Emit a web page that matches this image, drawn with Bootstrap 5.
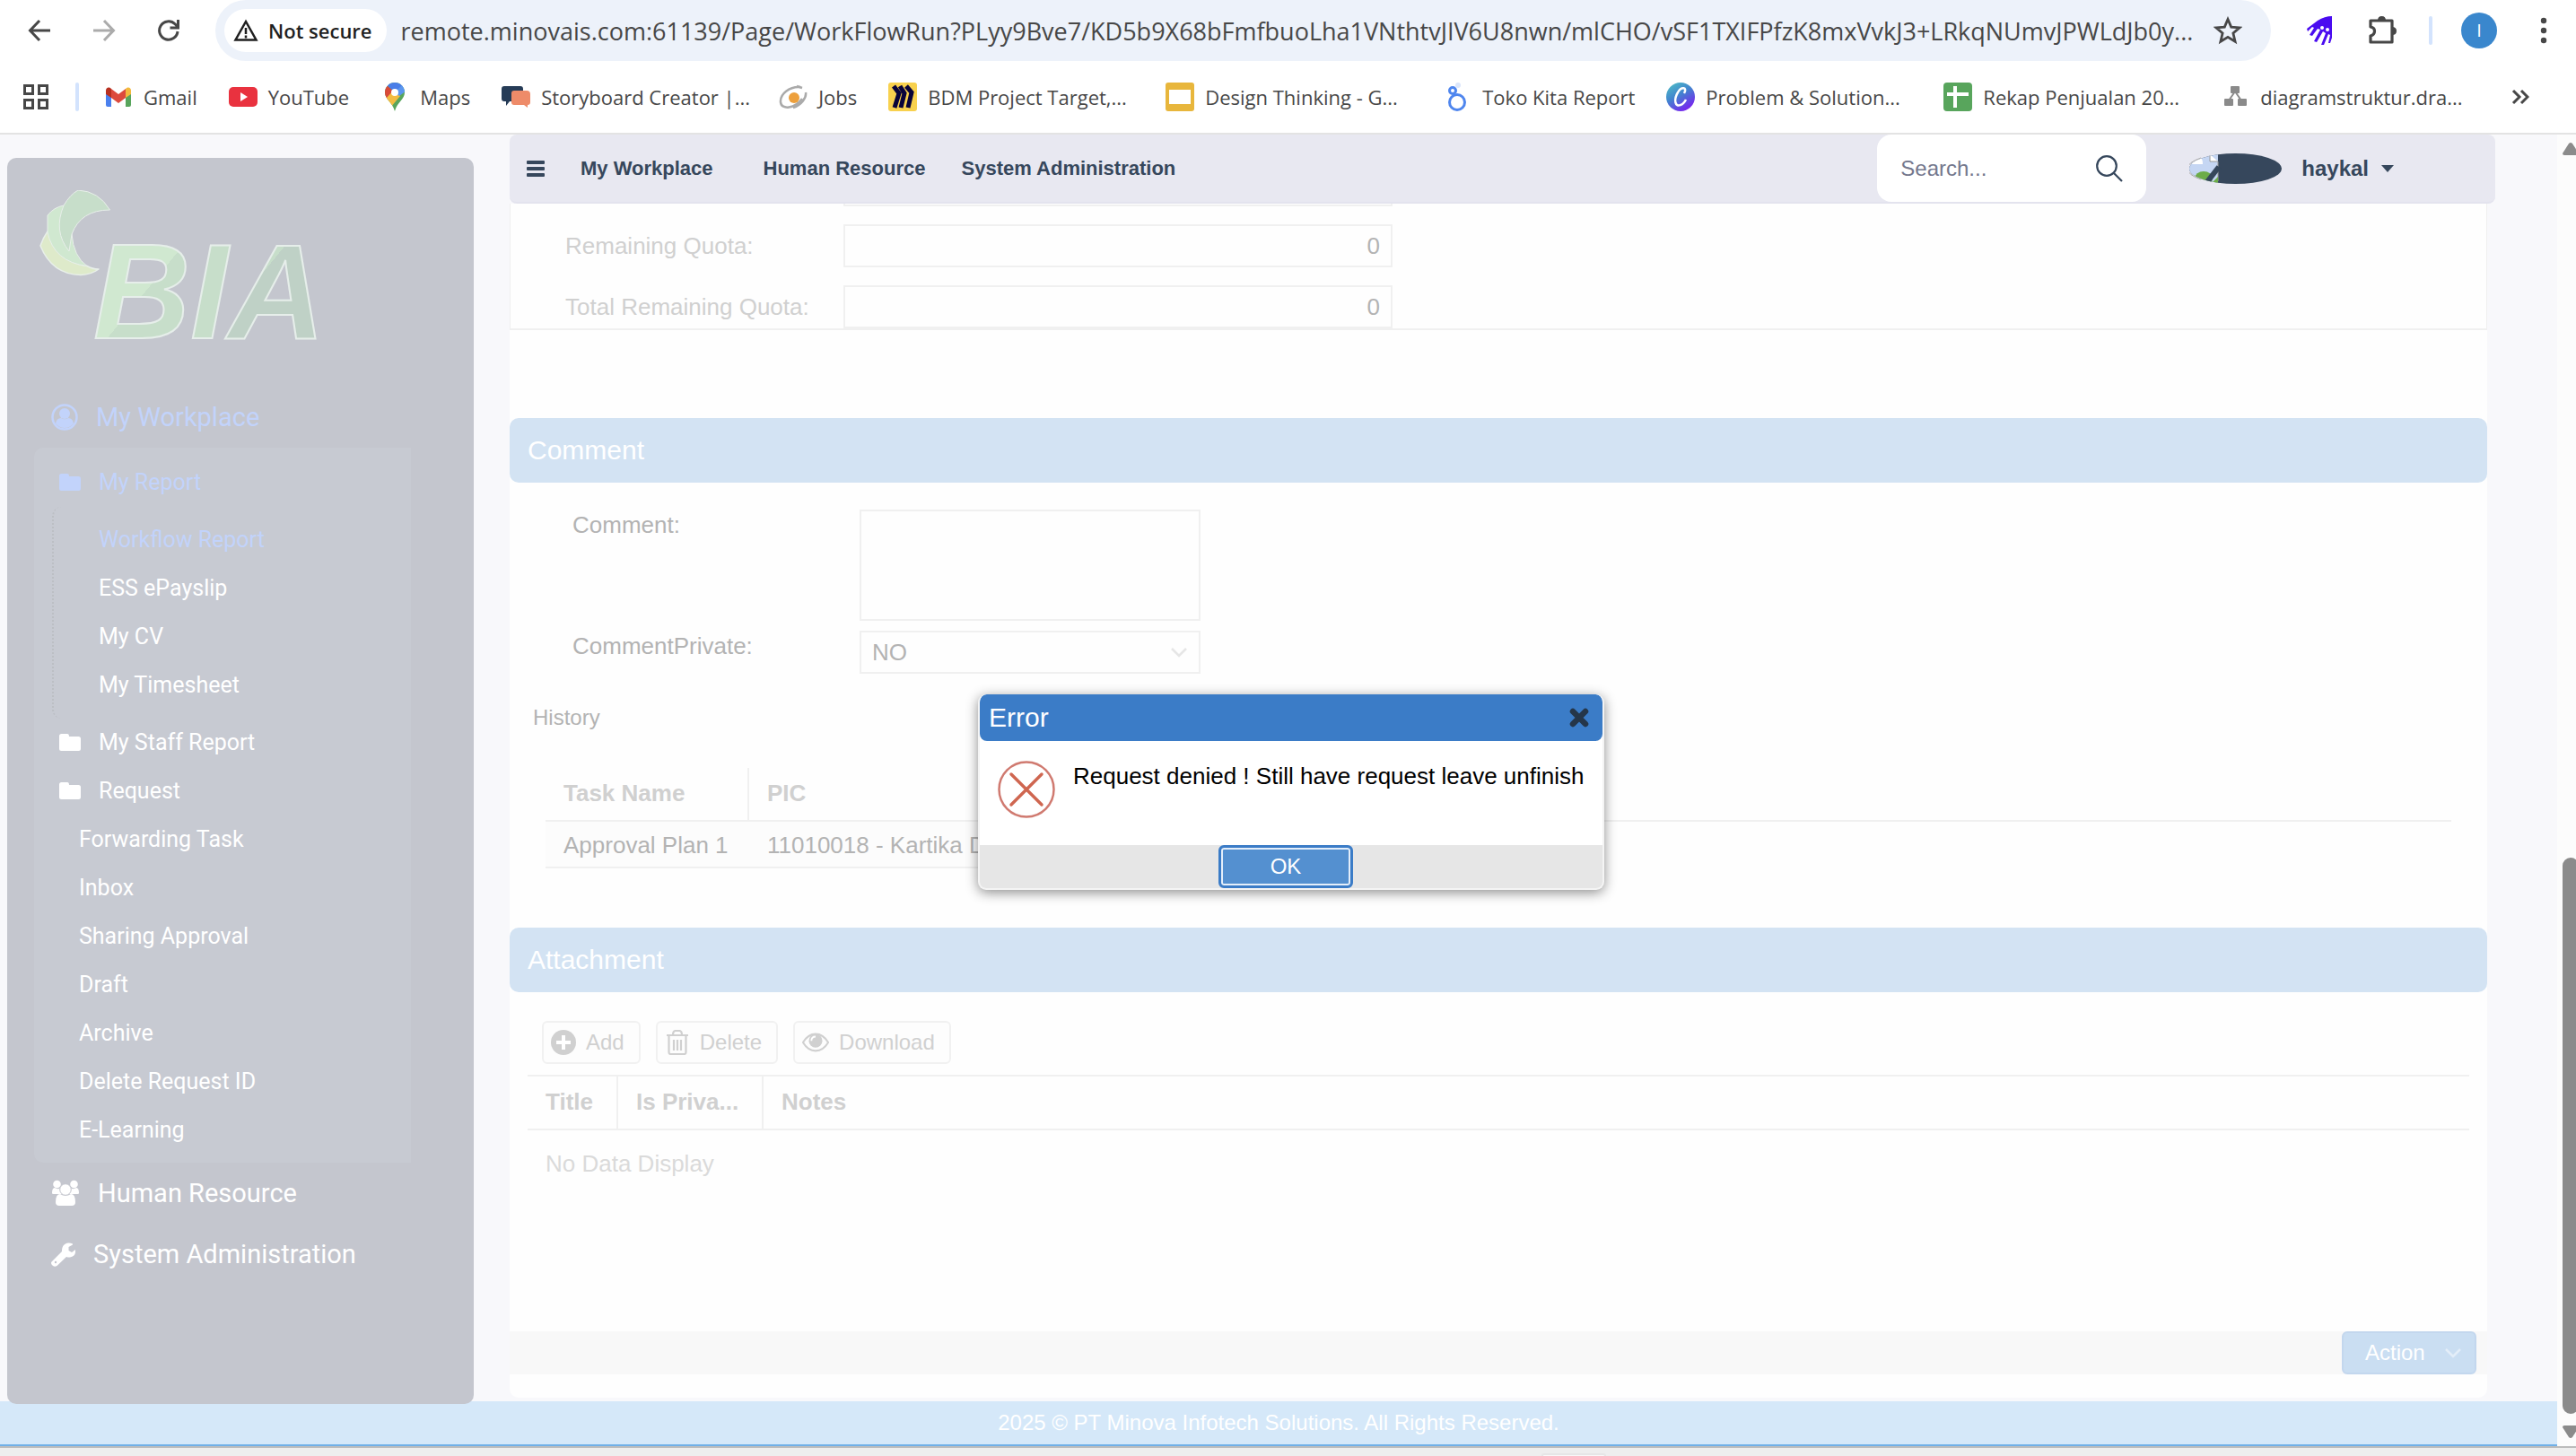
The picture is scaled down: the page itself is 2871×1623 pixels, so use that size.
<!DOCTYPE html>
<html lang="en">
<head>
<meta charset="utf-8">
<meta name="viewport" content="width=device-width, initial-scale=1">
<title>WorkFlowRun</title>
<link href="https://cdn.jsdelivr.net/npm/bootstrap@5.3.0/dist/css/bootstrap.min.css" rel="stylesheet">
<style>
body{font-family:"Liberation Sans",Arial,sans-serif;font-size:26px;line-height:34px;color:#b3b3b3;background:#fff;min-height:100vh;overflow:hidden}
a{text-decoration:none;color:inherit}
svg{display:block;flex:none}
button{font-family:inherit}
/* browser chrome */
.toolbar-row{height:68px;padding-left:8px}
.tool-btn{width:72px;height:68px;padding:0;border:0;background:none;display:flex;align-items:center;justify-content:center;flex:none}
.omnibox{height:68px;margin:0 16px;padding:0 32px 0 10px;background:#edf2fa;border-radius:34px;font-family:"Open Sans",sans-serif}
.chip{height:48px;border-radius:24px;padding:0 16px 0 10px;gap:11px;background:#fff;border:0;color:#1f1f1f;font-size:22px;font-weight:600;white-space:nowrap}
.url-field{border:0;background:none;margin-left:16px;padding:0;height:60px;font-size:27px;color:#474747;outline:0;min-width:0}
.rule-v{width:4px;height:32px;border-radius:2px;background:#d3e3fd;flex:none}
.rule-apps{margin:0 28px 0 30px}
.user-dot{width:40px;height:40px;border-radius:50%;background:#3a87cd;color:#fff;font-size:20px;line-height:40px;font-family:"Open Sans",sans-serif}
.bookmarks{height:82px;padding:0 36px 0 26px;border-bottom:2px solid #e3e3e3;font-family:"Open Sans",sans-serif;font-size:22px;color:#474747}
.bm{display:flex;align-items:center;gap:12px;padding-right:35px;white-space:nowrap;flex:none}
.bm-cut{width:309px;padding-right:0}
/* application */
.shell{background:#f8f8fb;min-width:0}
.shell-cols{padding-right:69px}
.side{width:520px;margin:26px 0 -3px 8px;padding-top:36px;background:#c4c6ce;border-radius:10px;color:#fff;font-family:Roboto,sans-serif;position:relative;flex:none}
.side-logo{margin:0 0 49px 36px}
.side ul{list-style:none;margin:0;padding:0}
.top-item{height:68px;padding-left:49px;gap:20px;font-size:29px;display:flex;align-items:center}
.sub-box{margin-left:30px!important;width:420px;padding:12px 0 9px!important;background:#c7cad2;border-radius:10px 0 0 10px;font-size:25px}
.sub-item{height:54px;padding-left:50px;display:flex;align-items:center;gap:20px}
.with-folder{padding-left:28px}
.nest{margin-left:20px!important;padding:10px 0!important;border-left:2px dotted #bcbfc4;border-radius:10px}
.current{color:#c2d3fb}
.main-col{margin-left:40px;padding-bottom:4px;min-width:0}
.top-nav{height:77px;padding:0 113px 0 19px;background:#e8e8f1;border-bottom:2px solid #e3e3ee;border-radius:8px;color:#36475c;font-size:22px;font-weight:700}
.top-nav a{white-space:nowrap}
.link-first{margin:0 56px 0 40px}
.link-next{margin-right:40px}
.search-box{width:300px;height:75px;border-radius:16px;background:#fff;padding:0 26px 0 26px}
.search-box input{border:0;outline:0;width:100%;min-width:0;padding:0;font-size:24px;background:none}
.search-box input::placeholder{color:#74788d;opacity:1}
.user-menu{margin-left:48px;gap:14px;font-size:24px}
.panel{margin-right:9px;background:#fefefe;border-radius:0 0 10px 10px;padding-bottom:26px}
.quota{border:solid #f0f0f0;border-width:0 1px 2px;padding-left:61px;margin-bottom:98px;color:#d0d0d0}
.quota-cut{height:3px;margin-bottom:20px;display:flex;overflow:hidden}
.quota-cut span{width:612px;margin-left:310px;border:solid #f0f0f0;border-width:0 2px 2px}
.quota-line{display:flex;align-items:center;margin-bottom:20px}
.quota-line:last-child{margin-bottom:0}
.quota-line label{width:310px}
.box{border:2px solid #f0f0f0;border-radius:0;background-color:#fefefe;color:#b3b3b3;font-size:26px;line-height:34px;padding:0 12px;height:48px;box-shadow:none}
.quota-line .box{width:612px;text-align:right}
.section-bar{height:72px;border-radius:10px;background:#d3e3f3;color:#fff;font-size:30px;line-height:72px;padding-left:20px;margin:0;font-weight:400}
.comment-form{padding:30px 0 0 70px}
.comment-line{display:flex;align-items:flex-start;margin-bottom:11px}
.comment-line label{width:320px}
.comment-line .box{width:380px}
.comment-line textarea.box{height:124px;resize:none}
.comment-line select.box{background-image:url("data:image/svg+xml,%3Csvg xmlns='http://www.w3.org/2000/svg' viewBox='0 0 18 11'%3E%3Cpath d='M1 1l8 8 8-8' fill='none' stroke='%23e6e6e6' stroke-width='2.5'/%3E%3C/svg%3E");background-size:18px 11px;background-position:right 13px center}
.history-title{margin:32px 0 39px 26px;font-size:24px}
.grid{border-collapse:separate;border-spacing:0;table-layout:fixed}
.grid th{height:60px;padding:0 0 2px 20px;border-bottom:2px solid #f0f0f0;color:#d0d0d0;font-weight:700;vertical-align:middle;white-space:nowrap}
.grid th+th{border-left:2px solid #f0f0f0}
.grid th.plain{border-left:0}
.grid td{padding:2px 0 0 20px;white-space:nowrap}
.history{margin:0 40px 66px;width:calc(100% - 80px)}
.history td{height:52px;background:#fcfcfc;border-bottom:2px solid #f0f0f0}
.history td+td{padding-left:22px}
.history td.plain{background:none;border:0}
.files{margin:0 20px 150px;width:calc(100% - 40px)}
.files th{height:62px;border-top:2px solid #f0f0f0}
.files td{height:74px;padding-top:0;color:#dadada}
.file-tools{padding:32px 0 12px 36px;gap:17px}
.tool{height:48px;border:2px solid #f1f1f1;border-radius:6px;background:#fdfdfd;color:#d0d0d0;font-size:24px;padding:0 16px 0 8px;gap:11px;display:flex;align-items:center}
.action-bar{background:#f8f8f8;padding-right:12px}
.action-btn{width:150px;height:48px;border:2px solid #c3d7ee;border-radius:6px;background:#cadef2;color:#fff;font-size:24px;padding:0 15px 0 24px}
.foot{height:50px;background:#d5e8f9;border-bottom:2px solid #70b0e8;color:#fff;font-size:24px;line-height:48px}
.scroll{width:21px;background:#fcfcfc;padding:9px 0 9px 6px;overflow:hidden;flex:none}
.thumb{width:18px;flex:0 0 620px;background:#8b8b8b;border-radius:9px;margin:auto 0 13px}
.status{height:11px;border-top:2px solid #bcbcbc;background:#eee;padding:6px 0 0 1718px}
.status span{display:block;width:72px;height:3px;border:2px solid #e6e6e6;border-bottom:0;border-radius:6px 6px 0 0;background:#f8f8f8}
/* message window */
.msg{position:absolute;left:1090px;top:774px;width:698px;border:2px solid #f4f4f4;border-top:0;border-radius:9px;background:#fff;box-shadow:0 3px 14px rgba(0,0,0,.45);color:#000;overflow:hidden}
.msg-head{height:52px;border-radius:8px;background:#3b7cc7;color:#fff;font-size:30px;padding:0 15px 0 10px}
.msg-body{height:116px;padding:22px 0 0 20px;gap:20px}
.msg-foot{height:48px;background:#e6e6e6;padding-right:12px}
.ok{width:150px;height:48px;padding:0;border:3px solid #3b7cc7;border-radius:6px;box-shadow:inset 0 0 0 2px #e4eefa;background:#5490d0;color:#fff;font-size:24px}
</style>
<script src="https://cdn.jsdelivr.net/npm/bootstrap@5.3.0/dist/js/bootstrap.bundle.min.js"></script>
</head>
<body class="d-flex flex-column position-relative">
<header>
  <div class="toolbar-row d-flex align-items-center">
    <button class="tool-btn" aria-label="Back"><svg width="26" height="26" viewBox="0 0 26 26" fill="none" stroke="#474747" stroke-width="3"><path d="M25 13H3M13 2L2.500 13 13 24"/></svg></button>
    <button class="tool-btn" aria-label="Forward"><svg width="26" height="26" viewBox="0 0 26 26" fill="none" stroke="#ababab" stroke-width="3"><path d="M1 13h22M13 2l10.500 11L13 24"/></svg></button>
    <button class="tool-btn" aria-label="Reload"><svg width="26" height="26" viewBox="0 0 26 26" fill="none" stroke="#474747" stroke-width="3"><path d="M23 14a10.200 10.200 0 1 1-3-8.200l3 3M23.500 1v9h-9"/></svg></button>
    <div class="omnibox d-flex align-items-center flex-grow-1">
      <button class="chip d-flex align-items-center"><svg width="28" height="26" viewBox="0 0 28 26" fill="none" stroke="#1f1f1f" stroke-width="2.500"><path d="M14 3L2.500 23.500h23z"/><path d="M14 10v7M14 18.500v3"/></svg>Not secure</button>
      <input class="url-field flex-grow-1" aria-label="Address" value="remote.minovais.com:61139/Page/WorkFlowRun?PLyy9Bve7/KD5b9X68bFmfbuoLha1VNthtvJIV6U8nwn/mlCHO/vSF1TXIFPfzK8mxVvkJ3+LRkqNUmvJPWLdJb0y...">
      <svg width="32" height="32" viewBox="0 0 32 32" fill="none" stroke="#474747" stroke-width="2.800"><path d="M16 3.500l3.700 8.600 9.300.8-7.100 6.100 2.200 9.200-8.100-4.900-8.100 4.900 2.200-9.200L3 12.900l9.300-.8z"/></svg>
    </div>
    <button class="tool-btn" aria-label="Extension"><svg width="34" height="34" viewBox="0 0 34 34"><path fill="#4a0cf0" d="M33 1v24l-2 6h-2l2-9-2-1-5 12h-3l5-13-3-2-7 12-3-1 7-13-3-1-6 8-3-1 5-8-2-1-5 5-1-3L17 6Q25 1 33 1z"/><circle cx="22" cy="14" r="2" fill="#fff"/><circle cx="28" cy="16" r="2" fill="#fff"/></svg></button>
    <button class="tool-btn" aria-label="Extensions"><svg width="34" height="34" viewBox="0 0 34 34"><path d="M4 6h24v24H4v-7c6-2 6-9 0-10z" fill="none" stroke="#474747" stroke-width="3.200" stroke-linejoin="round"/><path fill="#474747" d="M12 6q0-5 4.500-5T21 6zM28 13q5 0 5 4.500T28 22z"/></svg></button>
    <span class="rule-v mx-3"></span>
    <button class="tool-btn" aria-label="Profile"><span class="user-dot">I</span></button>
    <button class="tool-btn" aria-label="Menu"><svg width="8" height="30" viewBox="0 0 8 30" fill="#474747"><circle cx="4" cy="4" r="3.200"/><circle cx="4" cy="15" r="3.200"/><circle cx="4" cy="26" r="3.200"/></svg></button>
  </div>
  <nav class="bookmarks d-flex align-items-center" aria-label="Bookmarks">
    <svg width="28" height="28" viewBox="0 0 28 28" fill="none" stroke="#474747" stroke-width="3"><path d="M1.500 1.500h9v9h-9zM17.500 1.500h9v9h-9zM1.500 17.500h9v9h-9zM17.500 17.500h9v9h-9z"/></svg>
    <span class="rule-v rule-apps"></span>
    <a href="#" class="bm"><svg width="32" height="32" viewBox="0 0 32 32"><path fill="#4a80ee" d="M2 9l6 5v13H4q-2 0-2-2z"/><path fill="#58a55c" d="M24 14l6-5v16q0 2-2 2h-4z"/><path fill="#f3b93d" d="M24 7c3-3 6-1 6 2v4l-6 4z"/><path fill="#b8301f" d="M8 7C5 4 2 6 2 9v4l6 4z"/><path fill="#dc4a3d" d="M8 7l8 6 8-6v10l-8 6-8-6z"/></svg>Gmail</a>
    <a href="#" class="bm"><svg width="32" height="32" viewBox="0 0 32 32"><rect y="5" width="32" height="22" rx="5" fill="#e9323f"/><path fill="#fff" d="M13 11l8 5-8 5z"/></svg>YouTube</a>
    <a href="#" class="bm"><svg width="32" height="32" viewBox="0 0 32 32"><clipPath id="pin"><path d="M16 0a11 11 0 0 1 11 11c0 8-8 10-11 21C13 21 5 19 5 11A11 11 0 0 1 16 0z"/></clipPath><g clip-path="url(#pin)"><rect width="32" height="32" fill="#58a55c"/><path fill="#4a7ee8" d="M8 4l8 7L32 0H8z"/><path fill="#d94a38" d="M0 4h8l8 7-9 9-7-4z"/><path fill="#f3bc42" d="M5 19L16 7l6 8-10 12z"/><path fill="#5b96f0" d="M16 11l10-10 3 8-8 6z"/></g><circle cx="16" cy="11" r="4" fill="#fff"/></svg>Maps</a>
    <a href="#" class="bm bm-cut"><svg width="32" height="32" viewBox="0 0 32 32"><path fill="#263c57" d="M3 4h18q3 0 3 3v11q0 3-3 3H9l-4 5v-5H3q-3 0-3-3V7q0-3 3-3z"/><path fill="#ee8b69" d="M14 9h14q4 0 4 4v9q0 3-3 3v3l-4-3H14q-3 0-3-3V12q0-3 3-3z"/></svg>Storyboard Creator |...</a>
    <a href="#" class="bm"><svg width="32" height="32" viewBox="0 0 32 32"><g fill="none" stroke="#aaa" stroke-width="2.500"><path d="M24 5C12 4 1 13 2 22s16 7 24-4"/><path d="M30 11c1 6-5 14-14 17M20 4l6 2"/></g><circle cx="17" cy="17" r="6" fill="#eda03c"/></svg>Jobs</a>
    <a href="#" class="bm bm-cut"><svg width="32" height="32" viewBox="0 0 32 32"><rect width="32" height="32" rx="3" fill="#f8d14e"/><path d="M6 4l6 8-5 16M13 4l5 8-4 16M20 4l6 7-4 17" fill="none" stroke="#08033a" stroke-width="5"/></svg>BDM Project Target,...</a>
    <a href="#" class="bm bm-cut"><svg width="32" height="32" viewBox="0 0 32 32"><rect width="32" height="32" rx="3" fill="#e8b63c"/><path fill="#fff" d="M4 8h24v16H4z"/></svg>Design Thinking - G...</a>
    <a href="#" class="bm"><svg width="32" height="32" viewBox="0 0 32 32" fill="none" stroke="#4f86ee" stroke-width="3"><circle cx="16" cy="22" r="8.500"/><circle cx="11" cy="9" r="3.500"/><circle cx="17" cy="3" r="1.500" stroke="#dbe6fb"/></svg>Toko Kita Report</a>
    <a href="#" class="bm bm-cut"><svg width="32" height="32" viewBox="0 0 32 32"><linearGradient id="cv" x2=".6" y2="1"><stop stop-color="#4fc4c4"/><stop offset=".5" stop-color="#4285cf"/><stop offset="1" stop-color="#7626ee"/></linearGradient><circle cx="16" cy="16" r="16" fill="url(#cv)"/><path d="M20 12c4-7-3-8-7-1-5 8-3 17 3 14 3-1 5-4 6-6" fill="none" stroke="#fff" stroke-width="2.500"/></svg>Problem &amp; Solution...</a>
    <a href="#" class="bm bm-cut"><svg width="32" height="32" viewBox="0 0 32 32"><rect width="32" height="32" rx="4" fill="#58a55c"/><path d="M13 4v24M4 13h24" stroke="#fff" stroke-width="4"/></svg>Rekap Penjualan 20...</a>
    <a href="#" class="bm"><svg width="32" height="32" viewBox="0 0 32 32" fill="#8a8a8a"><path d="M16 10L9 20M16 10l7 10" stroke="#8a8a8a" stroke-width="2"/><rect x="11" y="4" width="10" height="8" rx="1"/><rect x="4" y="18" width="10" height="8" rx="1"/><rect x="19" y="18" width="10" height="8" rx="1"/></svg>diagramstruktur.dra...</a>
    <button class="border-0 bg-transparent p-0 ms-auto me-3" aria-label="More bookmarks"><svg width="20" height="18" viewBox="0 0 20 18" fill="none" stroke="#474747" stroke-width="3"><path d="M2 2l7 7-7 7M11 2l7 7-7 7"/></svg></button>
  </nav>
</header>

<div class="d-flex">
  <div class="shell flex-grow-1">
    <div class="shell-cols d-flex">
      <aside class="side">
        <svg class="side-logo" width="330" height="170" viewBox="0 0 330 170" role="img" aria-label="BIA">
          <defs>
            <linearGradient id="lg" gradientUnits="userSpaceOnUse" x1="60" y1="60" x2="250" y2="215">
              <stop offset=".32" stop-color="#d0e8d0"/><stop offset=".32" stop-color="#c7deca"/><stop offset=".68" stop-color="#c7deca"/><stop offset=".68" stop-color="#bfd1c6"/>
            </linearGradient>
          </defs>
          <g stroke="#e8efea" stroke-width="1.500" stroke-linejoin="round">
            <path fill="#deeaca" d="M9 46Q4 53 1 62Q14 94 46 94.500Q58 94 66 88Q59 88 53 84.500Q20 80 9 46z"/>
            <path fill="#d0e8d0" d="M27 17Q16 19 9 28V47Q16 80 53 84.500Q38 74 36 49z" stroke-width="1"/>
            <path fill="#c7deca" d="M43 0Q66 1 78.500 22Q46 22 36 49L33 68Q15 46 27 17Q34 5 43 0z" stroke-width="1"/>
          </g>
          <text x="60" y="165" font-family="Liberation Sans" font-weight="700" font-style="italic" font-size="150" fill="url(#lg)" stroke="#e6eeea" stroke-width="2">BIA</text>
        </svg>
        <ul>
          <li><a href="#" class="top-item current"><svg width="30" height="30" viewBox="0 0 30 30"><circle cx="15" cy="15" r="13.500" fill="none" stroke="currentColor" stroke-width="2.500"/><circle cx="15" cy="11" r="6" fill="currentColor"/><path fill="currentColor" d="M5 22q1-6 6-6 4 2.500 8 0 5 0 6 6-4 5-10 5T5 22z"/></svg>My Workplace</a>
            <ul class="sub-box">
              <li><a href="#" class="sub-item with-folder current"><svg width="24" height="20" viewBox="0 0 24 20"><path fill="currentColor" d="M2.500 0H9q2 0 2 3h10.500Q24 3 24 5.500v11q0 2.500-2.500 2.500h-19Q0 19 0 16.500v-14Q0 0 2.500 0z"/></svg>My Report</a>
                <ul class="nest">
                  <li><a href="#" class="sub-item current">Workflow Report</a></li>
                  <li><a href="#" class="sub-item">ESS ePayslip</a></li>
                  <li><a href="#" class="sub-item">My CV</a></li>
                  <li><a href="#" class="sub-item">My Timesheet</a></li>
                </ul>
              </li>
              <li><a href="#" class="sub-item with-folder"><svg width="24" height="20" viewBox="0 0 24 20"><path fill="currentColor" d="M2.500 0H9q2 0 2 3h10.500Q24 3 24 5.500v11q0 2.500-2.500 2.500h-19Q0 19 0 16.500v-14Q0 0 2.500 0z"/></svg>My Staff Report</a></li>
              <li><a href="#" class="sub-item with-folder"><svg width="24" height="20" viewBox="0 0 24 20"><path fill="currentColor" d="M2.500 0H9q2 0 2 3h10.500Q24 3 24 5.500v11q0 2.500-2.500 2.500h-19Q0 19 0 16.500v-14Q0 0 2.500 0z"/></svg>Request</a></li>
              <li><a href="#" class="sub-item">Forwarding Task</a></li>
              <li><a href="#" class="sub-item">Inbox</a></li>
              <li><a href="#" class="sub-item">Sharing Approval</a></li>
              <li><a href="#" class="sub-item">Draft</a></li>
              <li><a href="#" class="sub-item">Archive</a></li>
              <li><a href="#" class="sub-item">Delete Request ID</a></li>
              <li><a href="#" class="sub-item">E-Learning</a></li>
            </ul>
          </li>
          <li><a href="#" class="top-item"><svg width="32" height="30" viewBox="0 0 32 30" fill="currentColor"><circle cx="6.500" cy="5" r="4.300"/><circle cx="25.500" cy="5" r="4.300"/><path d="M1 15q0-6 3-6 3 2 6 .5 0 5 3 6.500H2.500Q1 16 1 15zM31 15q0-6-3-6-3 2-6 .5 0 5-3 6.500h10.500q1.500 0 1.500-1z"/><circle cx="16" cy="11" r="6.300" stroke="#c4c6ce"/><path d="M5 25q0-9 5-9 6 4 12 0 5 0 5 9 0 4-4 4H9q-4 0-4-4z"/></svg>Human Resource</a></li>
          <li><a href="#" class="top-item"><svg width="27" height="27" viewBox="0 0 27 27"><path fill="currentColor" d="M24 2.500L19.500 5v4l3.500 2 4-3q1 7-6 8.500-2 .3-4-.5L6.500 26q-2.500 1.500-4.500 0-3-2.500-1.500-4.500L12 10q-.5-7 5.500-9.300Q21 0 24 1.500z"/><circle cx="5" cy="22" r="1.200" fill="#c4c6ce"/></svg>System Administration</a></li>
        </ul>
      </aside>

      <main class="main-col flex-grow-1">
        <nav class="top-nav d-flex align-items-center">
          <button class="border-0 bg-transparent p-0" aria-label="Toggle menu"><svg width="20" height="18" viewBox="0 0 20 18" fill="#36475c"><rect width="20" height="4" rx="1"/><rect y="7" width="20" height="4" rx="1"/><rect y="14" width="20" height="4" rx="1"/></svg></button>
          <a href="#" class="link-first">My Workplace</a>
          <a href="#" class="link-next">Human Resource</a>
          <a href="#">System Administration</a>
          <div class="search-box d-flex align-items-center ms-auto">
            <input type="search" placeholder="Search..." aria-label="Search">
            <svg width="30" height="30" viewBox="0 0 30 30" fill="none" stroke="#36475c" stroke-width="2.200"><circle cx="12" cy="12" r="10.800"/><path d="M19.500 19.500L29 29"/></svg>
          </div>
          <a href="#" class="user-menu d-flex align-items-center">
            <svg class="me-2" width="103" height="34" viewBox="0 0 103 34"><clipPath id="el"><ellipse cx="51.500" cy="17" rx="51.500" ry="17"/></clipPath><g clip-path="url(#el)"><rect width="103" height="34" fill="#36475c"/><rect width="32" height="34" fill="#c5d6f3"/><path fill="#fff" d="M3 12q0-4 4-4 1-5 5-3 3 0 3 7zM23 1l9 8h-9z"/><path d="M23 1v8h9v22" fill="none" stroke="#999"/><ellipse cx="16" cy="28" rx="10" ry="8" fill="#6cac48"/><path fill="#6cac48" d="M24 34l8-8v8z"/><path d="M19 33l14-18" stroke="#36475c" stroke-width="6"/></g><path d="M13 5A51.500 17 0 0 0 13 29" fill="none" stroke="#aaa"/></svg>
            haykal
            <svg width="14" height="8" viewBox="0 0 14 8"><path fill="#36475c" d="M0 0h14L7 8z"/></svg>
          </a>
        </nav>

        <div class="panel">
          <div class="quota">
            <div class="quota-cut"><span></span></div>
            <div class="quota-line"><label for="rq">Remaining Quota:</label><input id="rq" class="box" value="0"></div>
            <div class="quota-line"><label for="trq">Total Remaining Quota:</label><input id="trq" class="box" value="0"></div>
          </div>

          <h2 class="section-bar">Comment</h2>
          <div class="comment-form">
            <div class="comment-line"><label for="cm">Comment:</label><textarea id="cm" class="box"></textarea></div>
            <div class="comment-line"><label for="cp">CommentPrivate:</label><select id="cp" class="form-select box"><option>NO</option><option>YES</option></select></div>
          </div>
          <div class="history-title">History</div>
          <table class="grid history">
            <colgroup><col style="width:225px"><col style="width:700px"><col></colgroup>
            <thead><tr><th>Task Name</th><th>PIC</th><th class="plain"></th></tr></thead>
            <tbody><tr><td>Approval Plan 1</td><td>11010018 - Kartika D</td><td class="plain"></td></tr></tbody>
          </table>

          <h2 class="section-bar">Attachment</h2>
          <div class="file-tools d-flex">
            <button class="tool"><svg width="28" height="28" viewBox="0 0 28 28"><circle cx="14" cy="14" r="14" fill="#d0d0d0"/><path d="M14 6v16M6 14h16" stroke="#fff" stroke-width="4"/></svg>Add</button>
            <button class="tool"><svg width="28" height="28" viewBox="0 0 28 28" fill="none" stroke="#d0d0d0" stroke-width="2.200"><path d="M2 6h24M9 6q0-5 3-5h4q3 0 3 5M4.500 6v19q0 2 2 2h15q2 0 2-2V6M10 11v12M14 11v12M18 11v12"/></svg>Delete</button>
            <button class="tool"><svg width="30" height="26" viewBox="0 0 32 24"><path d="M1 12Q7 2 16 2t15 10q-6 10-15 10T1 12z" fill="none" stroke="#d0d0d0" stroke-width="2.200"/><circle cx="16" cy="10" r="8" fill="#d0d0d0"/><path d="M11 10q0-5 5-5" fill="none" stroke="#fff" stroke-width="2"/></svg>Download</button>
          </div>
          <table class="grid files">
            <colgroup><col style="width:99px"><col style="width:162px"><col></colgroup>
            <thead><tr><th>Title</th><th>Is Priva...</th><th>Notes</th></tr></thead>
            <tbody><tr><td colspan="3">No Data Display</td></tr></tbody>
          </table>

          <div class="action-bar d-flex justify-content-end">
            <button class="action-btn d-flex align-items-center justify-content-between">Action<svg width="18" height="11" viewBox="0 0 18 11" fill="none" stroke="#e3edf8" stroke-width="2.500"><path d="M1 1l8 8 8-8"/></svg></button>
          </div>
        </div>
      </main>
    </div>
    <footer class="foot text-center">2025 © PT Minova Infotech Solutions. All Rights Reserved.</footer>
  </div>
  <div class="scroll d-flex flex-column">
    <svg width="18" height="14" viewBox="0 0 18 14"><path fill="#8b8b8b" d="M7 1q2-2 4 0l7 11q0 2-2 2H2q-2 0-2-2z"/></svg>
    <div class="thumb"></div>
    <svg width="18" height="14" viewBox="0 0 18 14"><path fill="#8b8b8b" d="M7 13q2 2 4 0l7-11q0-2-2-2H2Q0 0 0 2z"/></svg>
  </div>
</div>
<div class="status flex-grow-1"><span></span></div>

<div class="msg" role="dialog" aria-label="Error">
  <div class="msg-head d-flex align-items-center justify-content-between">Error<button class="border-0 bg-transparent p-0" aria-label="Close"><svg width="22" height="22" viewBox="0 0 22 22"><path d="M4 4l14 14M18 4L4 18" stroke="#253649" stroke-width="6.500" stroke-linecap="round"/></svg></button></div>
  <div class="msg-body d-flex">
    <svg width="64" height="64" viewBox="0 0 64 64" fill="none" stroke-linecap="round"><circle cx="32" cy="32" r="30.500" stroke="#d07a70" stroke-width="2.500"/><path d="M15 15l34 34M49 15L15 49" stroke="#cf6650" stroke-width="3.500"/></svg>
    <span>Request denied ! Still have request leave unfinish</span>
  </div>
  <div class="msg-foot d-flex justify-content-center"><button class="ok">OK</button></div>
</div>
</body>
</html>
